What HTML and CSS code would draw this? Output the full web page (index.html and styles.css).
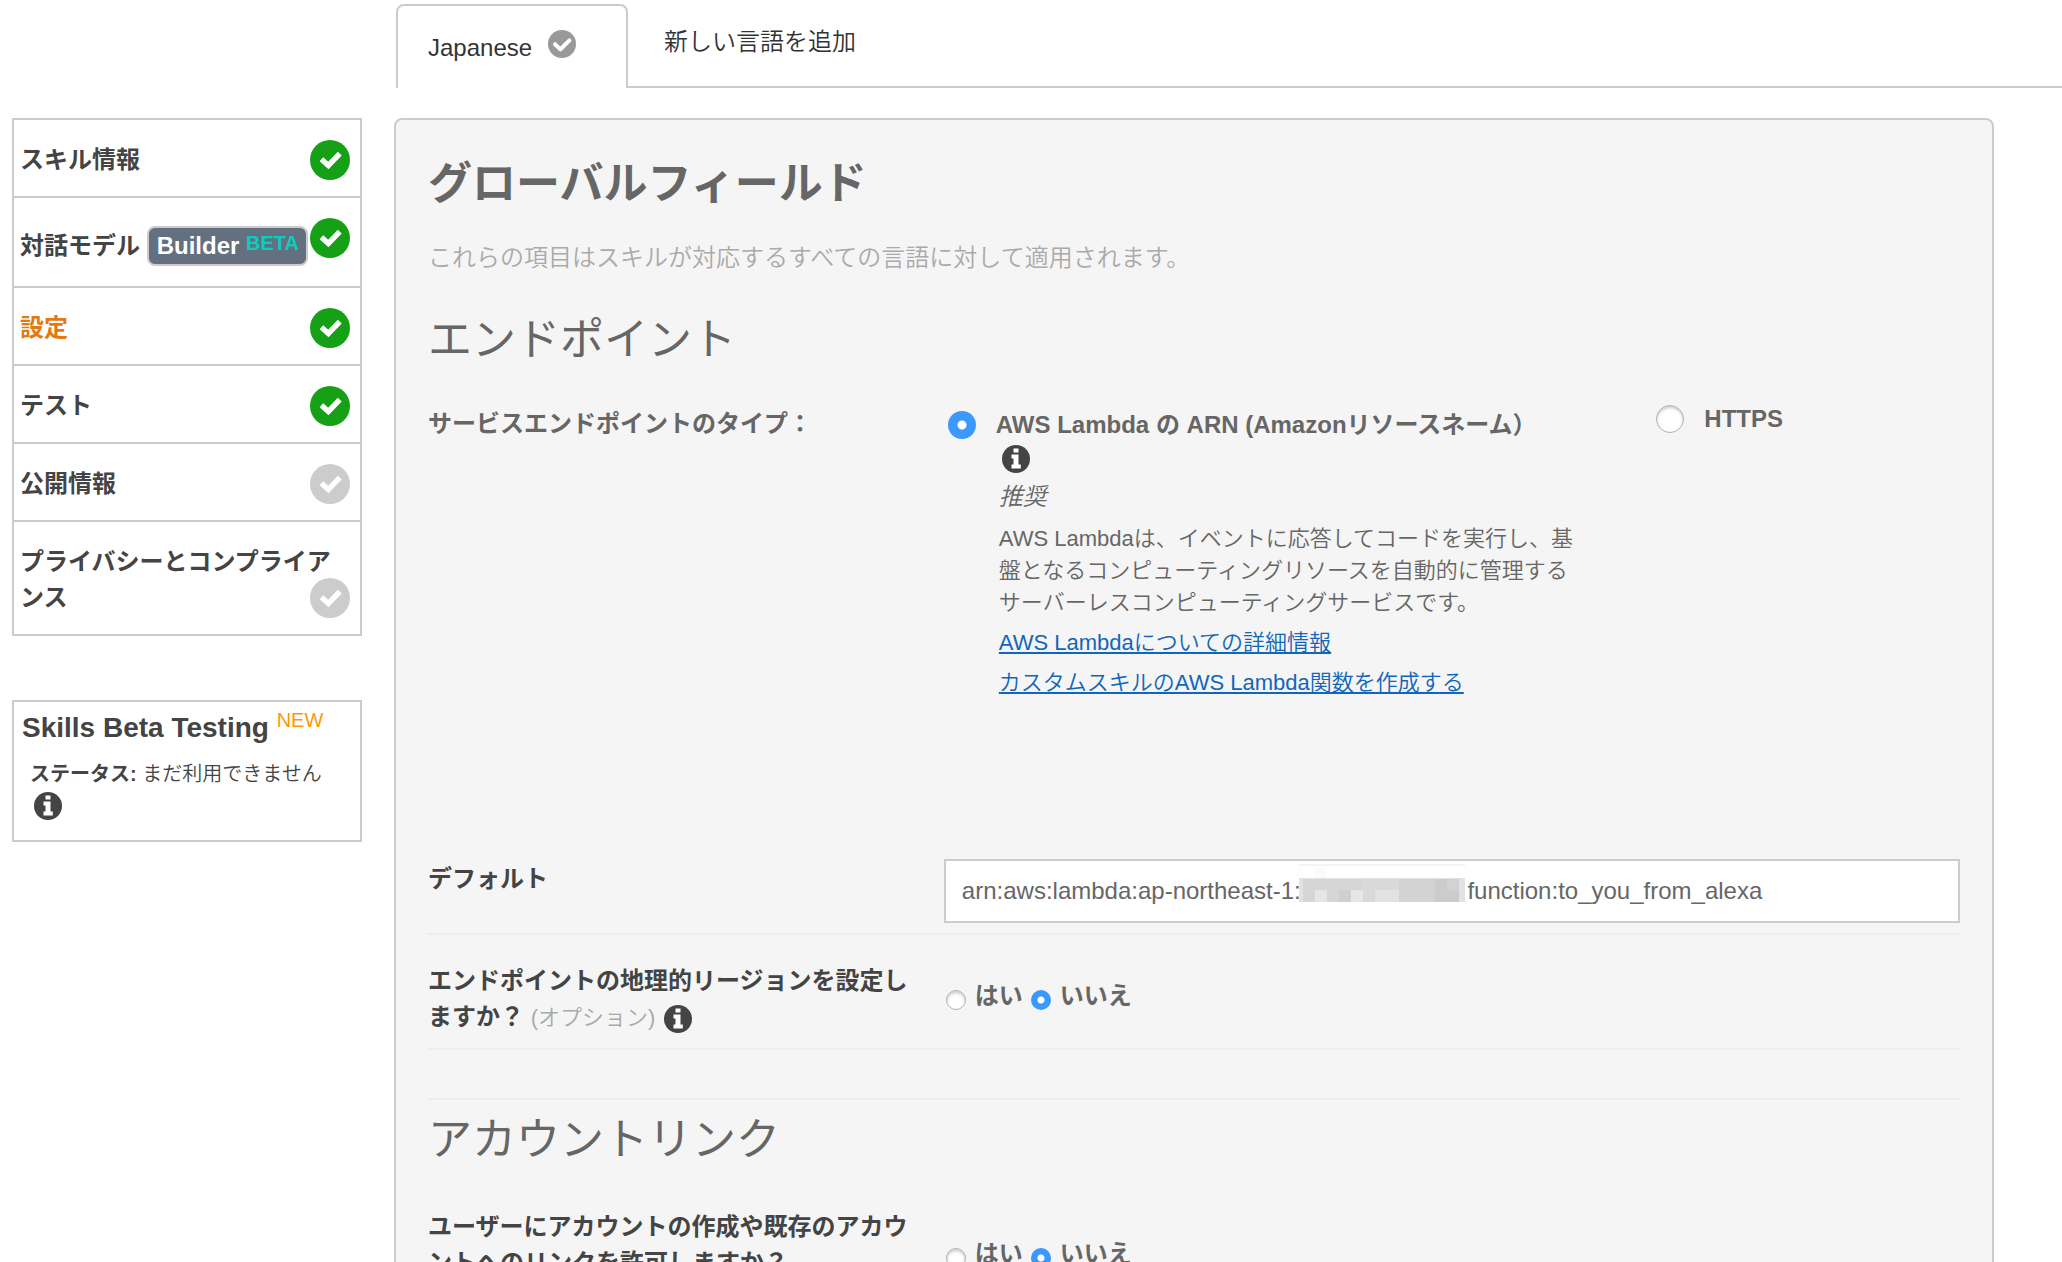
FILE: index.html
```html
<!DOCTYPE html>
<html lang="ja">
<head>
<meta charset="utf-8">
<title>設定</title>
<link rel="stylesheet" href="styles.css">
</head>
<body>
<svg class="sprite" aria-hidden="true">
  <symbol id="check" viewBox="0 0 40 40">
    <circle cx="20" cy="20" r="20" fill="currentColor"/>
    <path d="M11.4 19.2 L18.4 25.4 L29.8 13.6" fill="none" stroke="#fff" stroke-width="5.4"/>
  </symbol>
  <symbol id="check-round" viewBox="0 0 28 28">
    <circle cx="14" cy="14" r="14" fill="currentColor"/>
    <path d="M7 14.2 L12.4 19.4 L21.4 10.4" fill="none" stroke="#fff" stroke-width="4" stroke-linecap="round" stroke-linejoin="round"/>
  </symbol>
  <symbol id="info" viewBox="0 0 28 28">
    <circle cx="14" cy="14" r="14" fill="currentColor"/>
    <path d="M11.5 3.5h5v4h-5z M9.5 9.5h7v10h2.3v4h-9.3v-4h2v-6h-2z" fill="#fff"/>
  </symbol>
</svg>
<div class="page">
  <aside class="sidebar">
    <nav>
      <ul class="steps">
        <li class="step"><a href="#">スキル情報</a><svg class="state done"><use href="#check"/></svg></li>
        <li class="step step-tall"><a href="#">対話モデル <span class="builder">Builder <span class="beta">BETA</span></span></a><svg class="state done"><use href="#check"/></svg></li>
        <li class="step"><a href="#" class="current" aria-current="page">設定</a><svg class="state done"><use href="#check"/></svg></li>
        <li class="step"><a href="#">テスト</a><svg class="state done"><use href="#check"/></svg></li>
        <li class="step"><a href="#">公開情報</a><svg class="state"><use href="#check"/></svg></li>
        <li class="step step-long"><a href="#">プライバシーとコンプライアンス</a><svg class="state"><use href="#check"/></svg></li>
      </ul>
    </nav>
    <section class="beta-box">
      <h2>Skills Beta Testing <span class="new">NEW</span></h2>
      <p><b>ステータス:</b> まだ利用できません</p>
      <svg class="info"><use href="#info"/></svg>
    </section>
  </aside>
  <main class="main">
    <div class="tabs">
      <a href="#" class="tab tab-active">Japanese <svg class="tab-state"><use href="#check-round"/></svg></a>
      <a href="#" class="tab">新しい言語を追加</a>
    </div>
    <form class="panel">
      <h1>グローバルフィールド</h1>
      <p class="lead">これらの項目はスキルが対応するすべての言語に対して適用されます。</p>
      <h2 class="heading">エンドポイント</h2>
      <div class="row endpoint">
        <div class="label soft">サービスエンドポイントのタイプ：</div>
        <div class="options">
          <div class="option">
            <input type="radio" class="radio" name="type" id="lambda" checked>
            <div class="detail">
              <label for="lambda">AWS Lambda の ARN (Amazonリソースネーム）</label>
              <svg class="info"><use href="#info"/></svg>
              <em>推奨</em>
              <p>AWS Lambdaは、イベントに応答してコードを実行し、基盤となるコンピューティングリソースを自動的に管理するサーバーレスコンピューティングサービスです。</p>
              <a href="#">AWS Lambdaについての詳細情報</a>
              <a href="#">カスタムスキルのAWS Lambda関数を作成する</a>
            </div>
          </div>
          <div class="option option-https">
            <input type="radio" class="radio" name="type" id="https">
            <label for="https">HTTPS</label>
          </div>
        </div>
      </div>
      <div class="row default">
        <label class="label" for="arn">デフォルト</label>
        <div class="field">
          <input type="text" id="arn" value="arn:aws:lambda:ap-northeast-1:&nbsp;&nbsp;&nbsp;&nbsp;&nbsp;&nbsp;&nbsp;&nbsp;&nbsp;&nbsp;&nbsp;&nbsp;&nbsp;&nbsp;&nbsp;&nbsp;&nbsp;&nbsp;&nbsp;&nbsp;&nbsp;&nbsp;&nbsp;&nbsp;&nbsp;function:to_you_from_alexa">
          <svg class="mask" viewBox="0 0 166 46" shape-rendering="crispEdges" aria-hidden="true">
            <path d="M0 0h166v2H0z" fill="#f3f3f3"/><path d="M16 4h11v10H16z" fill="#fbfbfb"/>
            <path d="M0 14h166v24H0z" fill="#e2e2e2"/>
            <path d="M4 15h60v23H4z" fill="#d6d6d6"/>
            <path d="M64 15h36v11H64z" fill="#d9d9d9"/>
            <path d="M64 26h12v12H64z" fill="#d9d9d9"/>
            <path d="M16 26h12v12H16z M52 26h12v12H52z" fill="#e6e6e6"/>
            <path d="M40 26h12v12H40z" fill="#d0d0d0"/>
            <path d="M100 15h36v23h-36z" fill="#d3d3d3"/>
            <path d="M136 15h12v23h-12z M148 26h12v12h-12z" fill="#cccccc"/>
            <path d="M148 15h12v11h-12z" fill="#d2d2d2"/>
          </svg>
        </div>
      </div>
      <div class="row question" role="group">
        <div class="label">エンドポイントの地理的リージョンを設定しますか？ <span class="optional">(オプション)</span> <svg class="info inline"><use href="#info"/></svg></div>
        <div class="choices">
          <input type="radio" class="radio small" name="region" id="region-yes"><label for="region-yes">はい</label>
          <input type="radio" class="radio small" name="region" id="region-no" checked><label for="region-no">いいえ</label>
        </div>
      </div>
      <section class="account">
        <h2 class="heading">アカウントリンク</h2>
        <div class="row question" role="group">
          <div class="label">ユーザーにアカウントの作成や既存のアカウントへのリンクを許可しますか？</div>
          <div class="choices">
            <input type="radio" class="radio small" name="link" id="link-yes"><label for="link-yes">はい</label>
            <input type="radio" class="radio small" name="link" id="link-no" checked><label for="link-no">いいえ</label>
          </div>
        </div>
      </section>
    </form>
  </main>
</div>
</body>
</html>
```
FILE: styles.css
```css
* { box-sizing: border-box; }

body {
  margin: 0;
  background: #fff;
  color: #444;
  font: 24px/36px "Liberation Sans", "Noto Sans CJK JP", sans-serif;
  font-weight: 350;
}

h1, h2, p, ul { margin: 0; padding: 0; }
a { color: inherit; text-decoration: none; }
svg { display: block; }
.sprite { display: none; }

.page {
  display: flex;
  gap: 32px;
  height: 100vh;
  padding-left: 12px;
  overflow: hidden;
}

/* Sidebar */
.sidebar { flex: 0 0 350px; padding-top: 118px; }

.steps { list-style: none; border: 2px solid #ccc; }
.step {
  display: grid;
  align-items: center;
  padding: 20px 10px 16px 6px;
}
.step + .step { border-top: 2px solid #ccc; }
.step > * { grid-area: 1 / 1; }
.step a { font-weight: bold; }
.step .current { color: #e47911; }
.step-tall { grid-template-rows: 52px; }
.step-tall a { padding-top: 4px; }
.step-tall .state { align-self: start; }
.step-long { grid-template-rows: 76px; }
.step-long a { align-self: start; padding-top: 2px; }
.step-long .state { align-self: end; }

.state { width: 40px; height: 40px; justify-self: end; color: #ccc; }
.done { color: #16a016; }

.builder {
  display: inline-block;
  padding: 0 7px 0 8px;
  border: 2px solid #ccc;
  border-radius: 8px;
  background: #627080;
  color: #fff;
}
.beta { color: #0cccbf; font-size: 20px; line-height: 20px; vertical-align: 4px; }

.beta-box {
  margin-top: 64px;
  height: 142px;
  padding: 8px;
  border: 2px solid #ccc;
}
.beta-box h2 { font-size: 28px; }
.beta-box .new { color: #ff9900; font-size: 20px; font-weight: normal; line-height: 20px; vertical-align: 10px; }
.beta-box p { margin: 10px 0 0 8px; font-size: 20px; line-height: 36px; }
.beta-box .info { margin-left: 12px; }

.info { width: 28px; height: 28px; color: #444; }
.inline { display: inline-block; margin-left: 2px; vertical-align: -8px; }

/* Tabs */
.main { flex: 1; min-width: 0; padding-top: 4px; }
.tabs { display: flex; height: 84px; margin-left: 2px; }
.tab {
  flex: 1;
  padding: 20px 36px;
  border-bottom: 2px solid #ccc;
  color: #333;
}
.tab-active {
  display: flex;
  flex: 0 0 232px;
  gap: 16px;
  padding: 24px 30px;
  border: 2px solid #ccc;
  border-bottom: 0;
  border-radius: 8px 8px 0 0;
}
.tab-state { width: 28px; height: 28px; color: #999; }

/* Panel */
.panel {
  margin: 30px 68px 0 0;
  padding: 32px 32px 30px;
  border: 2px solid #ccc;
  border-radius: 8px;
  background: #f5f5f5;
}
h1, .heading { color: #666; font-size: 44px; line-height: 64px; }
.heading { font-weight: 400; }
.lead { margin: 22px 0 30px; color: #aaa; line-height: 40px; }

.row { display: grid; grid-template-columns: 1fr 2.1fr; gap: 32px; }
.label, .options label, .choices { font-weight: bold; }
.soft, .options, .choices { color: #666; }

.endpoint { min-height: 454px; margin-top: 33px; }
.soft { padding-top: 1px; }
.options { display: grid; grid-template-columns: 7fr 3fr; padding-left: 4px; }
.option { display: flex; align-items: flex-start; gap: 20px; }
.option .radio { margin-top: 6px; }
.option-https { margin-top: -6px; }
.option-https label { line-height: 40px; }
.detail { display: flex; flex-direction: column; align-items: flex-start; width: 580px; }
.detail label { line-height: 40px; }
.detail .info { margin-left: 6px; }
.detail em { margin-top: 4px; line-height: 40px; }
.detail p { margin: 6px 0 4px; font-size: 22px; line-height: 32px; }
.detail a { color: #1166bb; font-size: 22px; line-height: 40px; text-decoration: underline; }
.detail em, .detail p, .detail a { margin-left: 3px; }

.radio {
  flex: none;
  appearance: none;
  width: 28px;
  height: 28px;
  margin: 0;
  border: 1px solid #b0b0b0;
  border-radius: 50%;
  background: #fff;
  box-shadow: inset 0 2px 3px #ccc;
}
.radio:checked {
  border: 0;
  background: radial-gradient(circle, #fff 4px, #3b99fc 5px);
  box-shadow: none;
}
.small { width: 20px; height: 20px; }
.small:checked { background: radial-gradient(circle, #fff 3px, #3b99fc 4px); }

.default { padding-bottom: 10px; border-bottom: 2px solid #ededed; }
.default .label { padding-top: 2px; }
.field { position: relative; }
.field input {
  width: 100%;
  height: 64px;
  padding: 0 16px;
  border: 2px solid #ccc;
  background: #fff;
  color: #666;
  font: inherit;
}
.mask { position: absolute; top: 5px; left: 355px; width: 166px; height: 46px; }

.question { align-items: center; padding: 28px 0 12px; }
.default + .question { border-bottom: 2px solid #ededed; }
.optional { color: #aaa; font-size: 22px; font-weight: 350; }
.choices { display: flex; padding: 0 0 8px 2px; }
.choices label { margin: 0 8px 0 9px; }
.choices .radio { margin-top: 12px; }

.account { margin-top: 48px; padding-top: 8px; border-top: 2px solid #ededed; }
.account .question { padding-top: 37px; }
.account .choices { padding-top: 26px; }
```
